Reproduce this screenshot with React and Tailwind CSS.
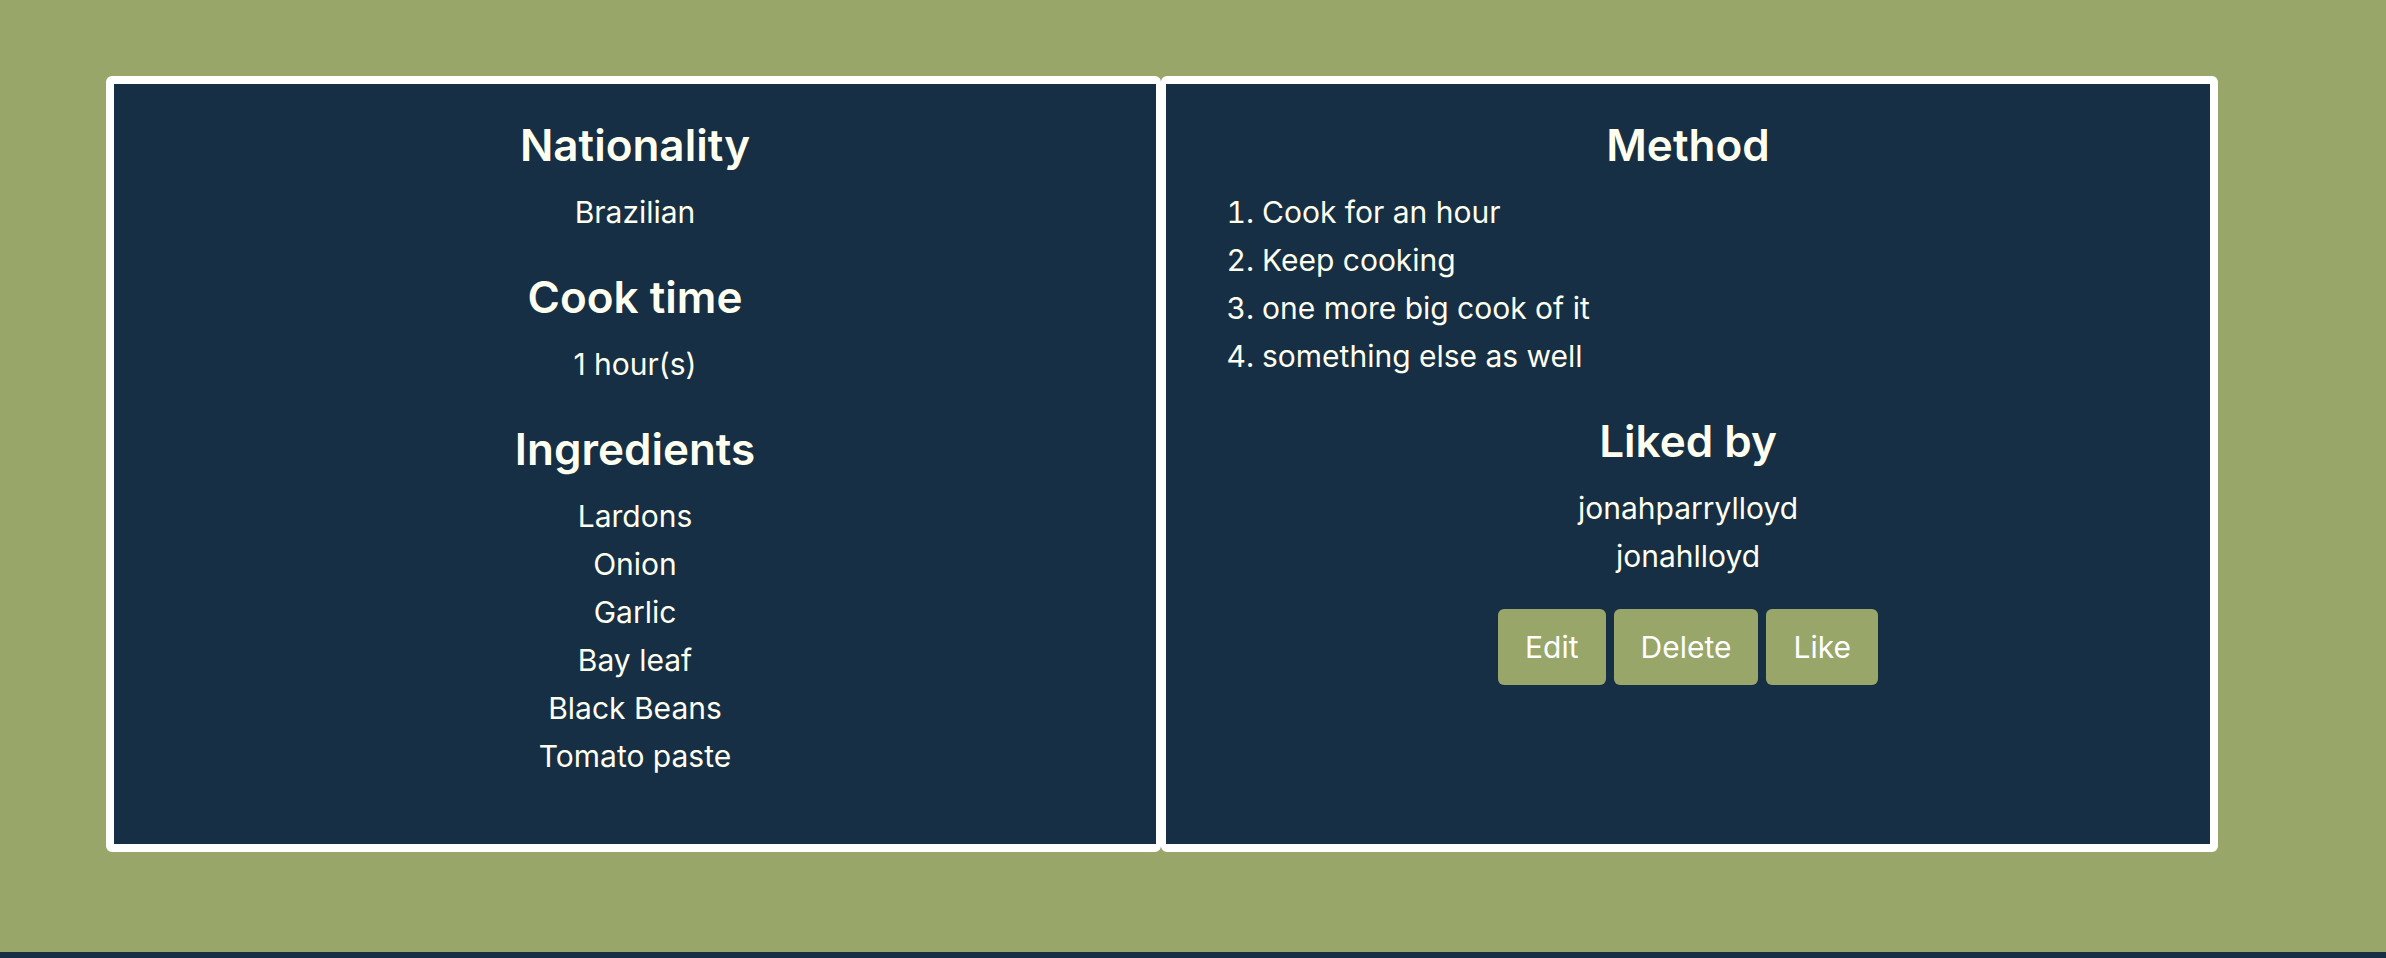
import React from 'react';

const ingredients = ['Lardons', 'Onion', 'Garlic', 'Bay leaf', 'Black Beans', 'Tomato paste'];
const steps = ['Cook for an hour', 'Keep cooking', 'one more big cook of it', 'something else as well'];
const likedBy = ['jonahparrylloyd', 'jonahlloyd'];

const Heading = ({ children }) => (
  <h2 className="text-[44px] leading-[53px] font-semibold text-[#fffff0] mb-4">{children}</h2>
);

const Section = ({ title, children }) => (
  <div className="flex flex-col items-center">
    <Heading>{title}</Heading>
    {children}
  </div>
);

const App = () => {
  return (
    <div className="min-h-screen bg-[#98a66a] font-['Inter',sans-serif] text-[30px] leading-[48px] text-[#fffff0]">
      <div className="pt-[76px] pl-[106px] pb-[100px] flex">
        <div className="w-[1055px] h-[776px] bg-[#162f44] border-[8px] border-r-[5px] border-white rounded-[6px] pt-[35px] flex flex-col gap-[35px]">
          <Section title="Nationality">
            <p>Brazilian</p>
          </Section>
          <Section title="Cook time">
            <p>1 hour(s)</p>
          </Section>
          <Section title="Ingredients">
            <ul>
              {ingredients.map((item) => (
                <li key={item} className="text-center">{item}</li>
              ))}
            </ul>
          </Section>
        </div>

        <div className="w-[1057px] h-[776px] bg-[#162f44] border-[8px] border-l-[5px] border-white rounded-[6px] pt-[35px] flex flex-col gap-[35px]">
          <div className="flex flex-col">
            <div className="text-center">
              <Heading>Method</Heading>
            </div>
            <ol className="list-decimal pl-[96px]">
              {steps.map((step) => (
                <li key={step}>{step}</li>
              ))}
            </ol>
          </div>
          <Section title="Liked by">
            <div className="flex flex-col items-center">
              {likedBy.map((name) => (
                <span key={name}>{name}</span>
              ))}
            </div>
            <div className="flex gap-2 mt-[29px]">
              <button className="h-[76px] px-[27px] rounded-[6px] bg-[#98a66a] text-white">Edit</button>
              <button className="h-[76px] px-[27px] rounded-[6px] bg-[#98a66a] text-white">Delete</button>
              <button className="h-[76px] px-[27px] rounded-[6px] bg-[#98a66a] text-white">Like</button>
            </div>
          </Section>
        </div>
      </div>
      <footer className="h-[6px] bg-[#162f44]" />
    </div>
  );
};

export default App;
